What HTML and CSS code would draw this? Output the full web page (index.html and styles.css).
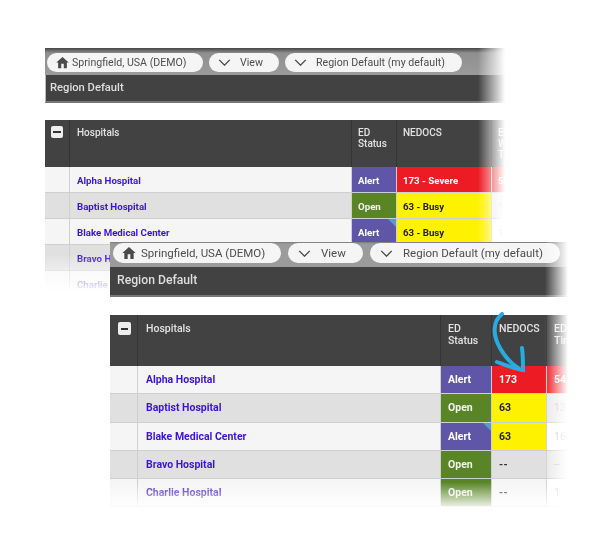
FILE: index.html
```html
<!DOCTYPE html>
<html lang="en">
<head>
<meta charset="utf-8">
<title>Region Default</title>
<link rel="stylesheet" href="styles.css">
</head>
<body>
<main class="canvas">
  <section class="shot shot-a">
    <div class="toolbar">
      <div class="pill pill-home"><svg class="ico" viewBox="0 0 24 24"><path d="M10 21v-7h4v7h5v-9h3L12 3 2 12h3v9z"/></svg><span>Springfield, USA (DEMO)</span></div>
      <div class="pill pill-view"><svg class="chev" viewBox="0 0 14 8"><path d="M1 1l6 6 6-6"/></svg><span>View</span></div>
      <div class="pill pill-region"><svg class="chev" viewBox="0 0 14 8"><path d="M1 1l6 6 6-6"/></svg><span>Region Default (my default)</span></div>
    </div>
    <div class="title">Region Default</div>
    <div class="table">
      <div class="row head">
        <div class="c c0"><span class="box"></span></div><div class="c c1">Hospitals</div><div class="c c2">ED<br>Status</div><div class="c c3">NEDOCS</div><div class="c c4">ED<br>Wait<br>Time</div>
      </div>
      <div class="row odd"><div class="c c0"></div><div class="c c1"><a>Alpha Hospital</a></div><div class="c c2 alert">Alert</div><div class="c c3 red">173 - Severe</div><div class="c c4 red">54</div></div>
      <div class="row even"><div class="c c0"></div><div class="c c1"><a>Baptist Hospital</a></div><div class="c c2 open">Open</div><div class="c c3 yellow">63 - Busy</div><div class="c c4 dim">13</div></div>
      <div class="row odd"><div class="c c0"></div><div class="c c1"><a>Blake Medical Center</a></div><div class="c c2 alert flag">Alert</div><div class="c c3 yellow">63 - Busy</div><div class="c c4 dim">16</div></div>
      <div class="row even"><div class="c c0"></div><div class="c c1"><a>Bravo Hospital</a></div><div class="c c2 open">Open</div><div class="c c3 none">--</div><div class="c c4 dim">--</div></div>
      <div class="row odd"><div class="c c0"></div><div class="c c1"><a>Charlie Hospital</a></div><div class="c c2 open">Open</div><div class="c c3 none">--</div><div class="c c4 dim">1</div></div>
    </div>
  </section>

  <section class="shot shot-b">
    <div class="toolbar">
      <div class="pill pill-home"><svg class="ico" viewBox="0 0 24 24"><path d="M10 21v-7h4v7h5v-9h3L12 3 2 12h3v9z"/></svg><span>Springfield, USA (DEMO)</span></div>
      <div class="pill pill-view"><svg class="chev" viewBox="0 0 14 8"><path d="M1 1l6 6 6-6"/></svg><span>View</span></div>
      <div class="pill pill-region"><svg class="chev" viewBox="0 0 14 8"><path d="M1 1l6 6 6-6"/></svg><span>Region Default (my default)</span></div>
    </div>
    <div class="title">Region Default</div>
    <div class="table">
      <div class="row head">
        <div class="c c0"><span class="box"></span></div><div class="c c1">Hospitals</div><div class="c c2">ED<br>Status</div><div class="c c3">NEDOCS</div><div class="c c4">ED<br>Time</div>
      </div>
      <div class="row odd"><div class="c c0"></div><div class="c c1"><a>Alpha Hospital</a></div><div class="c c2 alert">Alert</div><div class="c c3 red">173</div><div class="c c4 red">54</div></div>
      <div class="row even"><div class="c c0"></div><div class="c c1"><a>Baptist Hospital</a></div><div class="c c2 open">Open</div><div class="c c3 yellow">63</div><div class="c c4 dim">13</div></div>
      <div class="row odd"><div class="c c0"></div><div class="c c1"><a>Blake Medical Center</a></div><div class="c c2 alert flag">Alert</div><div class="c c3 yellow">63</div><div class="c c4 dim">16</div></div>
      <div class="row even"><div class="c c0"></div><div class="c c1"><a>Bravo Hospital</a></div><div class="c c2 open">Open</div><div class="c c3 none">--</div><div class="c c4 dim">--</div></div>
      <div class="row odd"><div class="c c0"></div><div class="c c1"><a>Charlie Hospital</a></div><div class="c c2 open">Open</div><div class="c c3 none">--</div><div class="c c4 dim">1</div></div>
    </div>
  </section>

  <svg class="arrow" viewBox="0 0 40 64" fill="none">
    <path d="M12 2C2 10 3 24 10 36c4 7 10 15 18 20"/>
    <path d="M32 36c1 7 1 13 1 22C25 57 15 53 7 50"/>
  </svg>
</main>
</body>
</html>
```
FILE: styles.css
```css
* { box-sizing: border-box; }
html, body { margin: 0; background: #fff; }
body { font-family: Roboto, "Liberation Sans", sans-serif; }
.canvas { position: relative; width: 601px; height: 548px; overflow: hidden; background: #fff; }

.shot {
  position: absolute;
  overflow: hidden;
  background: #fff;
  -webkit-mask-composite: source-in;
  mask-composite: intersect;
}

.toolbar { display: flex; align-items: center; }
.pill { display: flex; align-items: center; background: #f5f5f5; border-radius: 12px; color: #4d4d4d; white-space: nowrap; }
.ico { fill: #4a4a4a; flex: none; }
.chev { fill: none; stroke: #4a4a4a; stroke-width: 1.6; flex: none; }
.title { background: #424242; color: #dedede; font-weight: 500; border-bottom: 2px solid #777; }

.table { display: flex; flex-direction: column; }
.row { display: flex; }
.c { flex: none; display: flex; align-items: center; border-right: 1px solid #cfcfcf; border-bottom: 1px solid #cfcfcf; }
.c a { color: #3a14d6; font-weight: 700; }
.c0 { justify-content: center; }
.c4 { flex: 1; border-right: 0; }
.odd .c { background: #f5f5f5; }
.even .c { background: #e0e0e0; }

.head .c { display: block; background: #424242; color: #e2e2e2; font-weight: 500; border-right: 1px solid #353535; border-bottom: 0; }
.head .c4 { border-right: 0; }
.box { display: block; background: #eee; border-radius: 2px; position: relative; }
.box::after { content: ""; position: absolute; left: 20%; right: 20%; top: 50%; height: 2px; margin-top: -1px; background: #333; }

.row .alert { background: #6056a8; color: #fff; font-weight: 700; position: relative; }
.row .open { background: #598527; color: #f2f2f2; font-weight: 700; }
.row .red { background: #ed1c24; color: #fff; font-weight: 700; }
.row .yellow { background: #fff200; color: #222; font-weight: 700; }
.row .none { color: #333; font-weight: 700; letter-spacing: 0.3px; }
.row .c4.dim { background: #fff; color: #b5b5b5; font-weight: 400; }
.even .c4.dim { background: #e9e9e9; }
.flag::after { content: ""; position: absolute; right: 0; top: 0; border-style: solid; border-width: 0 8px 8px 0; border-color: transparent #5b9bc9 transparent transparent; }

/* first screenshot, behind */
.shot-a {
  left: 45px; top: 48px; width: 460px; height: 250px;
  -webkit-mask-image: linear-gradient(to right, #000 433px, transparent 460px), linear-gradient(to bottom, #000 206px, transparent 244px);
  mask-image: linear-gradient(to right, #000 433px, transparent 460px), linear-gradient(to bottom, #000 206px, transparent 244px);
  font-size: 10px;
}
.shot-a .toolbar { height: 27px; padding: 5px 0 3px 2px; gap: 6px; background: linear-gradient(#444 0, #8f8f8f 5px, #9b9b9b 100%); }
.shot-a .pill { height: 19px; font-size: 10.6px; }
.shot-a .pill-home { width: 156px; padding-left: 8px; gap: 2px; }
.shot-a .pill-view { width: 70px; padding-left: 9px; gap: 9px; }
.shot-a .pill-region { width: 177px; padding-left: 9px; gap: 9px; }
.shot-a .ico { width: 15px; height: 15px; }
.shot-a .chev { width: 13px; height: 7px; }
.shot-a .title { height: 28px; padding: 6px 0 0 4px; font-size: 11.2px; border-left: 1px solid #bbb; }
.shot-a .table { margin-top: 17px; }
.shot-a .head { height: 47px; }
.shot-a .row:not(.head) { height: 26px; font-size: 9.7px; }
.shot-a .c { padding-top: 1px; }
.shot-a .head .c { padding-top: 7px; line-height: 11px; }
.shot-a .c0 { width: 25px; }
.shot-a .c1 { width: 282px; padding-left: 7px; }
.shot-a .c2 { width: 45px; padding-left: 6px; }
.shot-a .c3 { width: 95px; padding-left: 6px; }
.shot-a .c4 { padding-left: 6px; }
.shot-a .head .c0 { padding: 6px 0 0 6px; }
.shot-a .box { width: 12px; height: 12px; }

/* second screenshot, in front */
.shot-b {
  left: 110px; top: 242px; width: 460px; height: 272px;
  -webkit-mask-image: linear-gradient(to right, #000 435px, transparent 458px), linear-gradient(to bottom, #000 240px, transparent 268px);
  mask-image: linear-gradient(to right, #000 435px, transparent 458px), linear-gradient(to bottom, #000 240px, transparent 268px);
  font-size: 10.5px;
}
.shot-b .toolbar { height: 25px; padding: 1px 0 4px 3px; gap: 7px; background: linear-gradient(#7c7c7c 0, #9b9b9b 2px); }
.shot-b .pill { height: 20px; font-size: 11.5px; }
.shot-b .pill-home { width: 168px; padding-left: 8px; gap: 4px; }
.shot-b .pill-view { width: 75px; padding-left: 10px; gap: 10px; }
.shot-b .pill-region { width: 190px; padding-left: 10px; gap: 10px; }
.shot-b .ico { width: 16px; height: 16px; }
.shot-b .chev { width: 13px; height: 7px; }
.shot-b .title { height: 30px; padding: 6px 0 0 7px; font-size: 12.2px; }
.shot-b .table { margin-top: 18px; }
.shot-b .head { height: 51px; }
.shot-b .row:not(.head) { height: 28.25px; }
.shot-b .head .c { padding-top: 8px; line-height: 12px; }
.shot-b .c0 { width: 28px; }
.shot-b .c1 { width: 303px; padding-left: 8px; }
.shot-b .c2 { width: 51px; padding-left: 7px; }
.shot-b .c3 { width: 55px; padding-left: 7px; }
.shot-b .c4 { padding-left: 7px; }
.shot-b .head .c0 { padding: 7px 0 0 8px; }
.shot-b .box { width: 13px; height: 13px; }

.arrow { position: absolute; left: 490px; top: 312px; width: 40px; height: 64px; stroke: #29abe2; stroke-width: 4; stroke-linecap: round; }
```
